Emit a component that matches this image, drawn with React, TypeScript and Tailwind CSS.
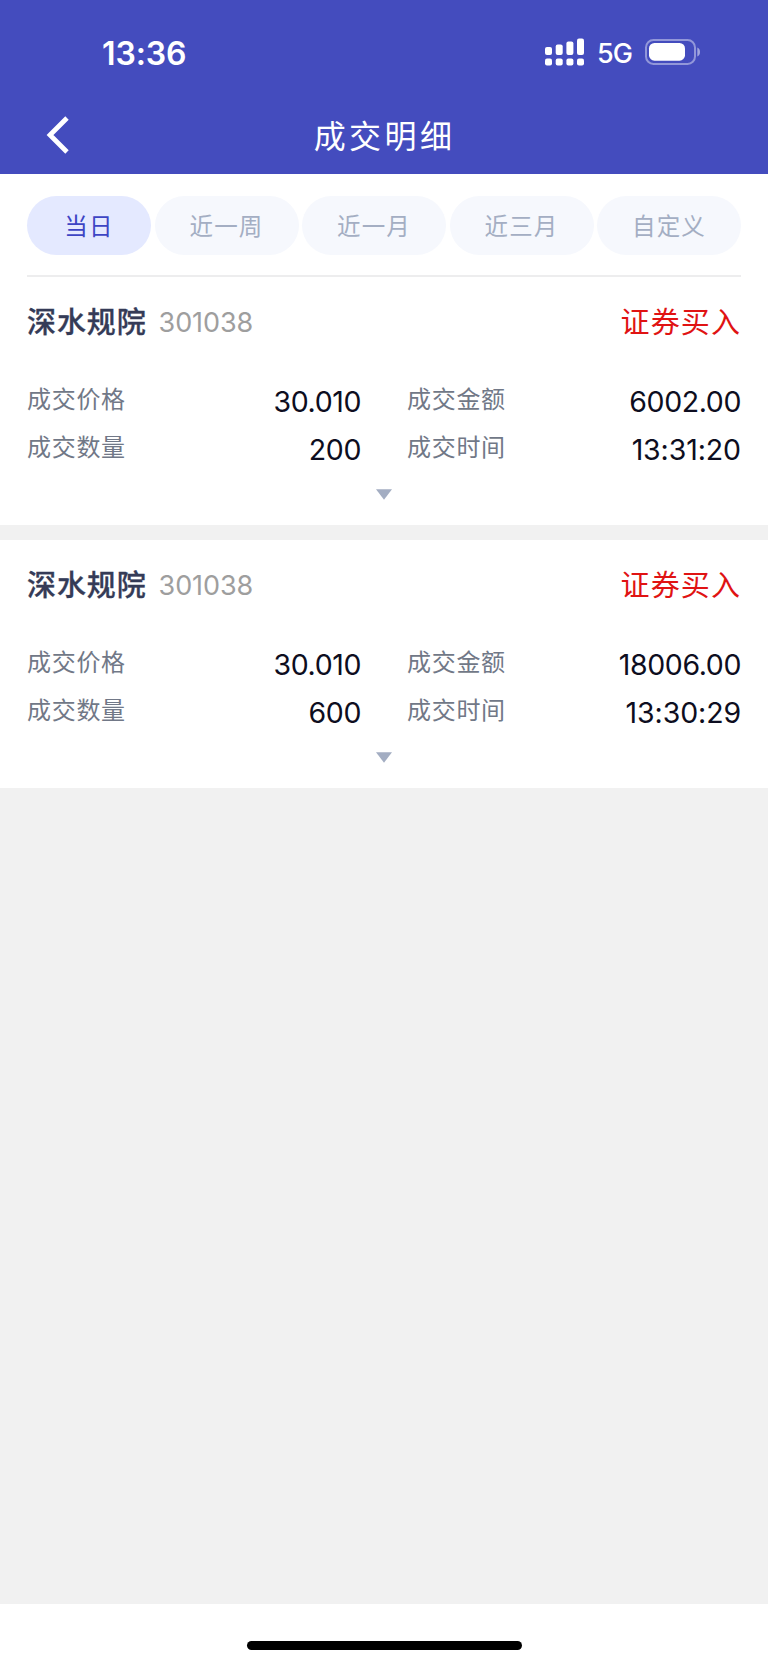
import { useState } from 'react'
import clsx from 'clsx'

interface Trade {
  name: string
  code: string
  side: string
  price: string
  amount: string
  quantity: string
  time: string
}

const TABS = ['当日', '近一周', '近一月', '近三月', '自定义']

const TRADES: Trade[] = [
  {
    name: '深水规院',
    code: '301038',
    side: '证券买入',
    price: '30.010',
    amount: '6002.00',
    quantity: '200',
    time: '13:31:20',
  },
  {
    name: '深水规院',
    code: '301038',
    side: '证券买入',
    price: '30.010',
    amount: '18006.00',
    quantity: '600',
    time: '13:30:29',
  },
]

function SignalIcon() {
  return (
    <svg width="40" height="28" viewBox="0 0 40 28" fill="currentColor">
      <rect x="0" y="9" width="7" height="8" rx="2" />
      <rect x="10.7" y="6.5" width="7" height="10.5" rx="2" />
      <rect x="21.4" y="3.5" width="7" height="13.5" rx="2" />
      <rect x="32" y="0.5" width="7" height="16.5" rx="2" />
      <rect x="0" y="20.5" width="7" height="7" rx="2" />
      <rect x="10.7" y="20.5" width="7" height="7" rx="2" />
      <rect x="21.4" y="20.5" width="7" height="7" rx="2" />
      <rect x="32" y="20.5" width="7" height="7" rx="2" />
    </svg>
  )
}

function BatteryIcon() {
  return (
    <svg width="56" height="26" viewBox="0 0 56 26" fill="none">
      <rect x="1" y="1" width="49" height="24" rx="7.5" stroke="white" strokeOpacity="0.42" strokeWidth="2" />
      <rect x="4" y="4" width="36" height="17.7" rx="5.5" fill="white" />
      <path d="M52.3 8.5C54.2 9.4 55 11 55 13s-.8 3.6-2.7 4.5z" fill="white" fillOpacity="0.5" />
    </svg>
  )
}

function StatusBar() {
  return (
    <div className="flex h-[104px] justify-between pl-[102px] pr-[67px] text-white">
      <span className="pt-[34px] text-[32px] leading-10 font-semibold tracking-[-0.1px]">13:36</span>
      <div className="flex items-start">
        <div className="pt-[37.5px]">
          <SignalIcon />
        </div>
        <span className="ml-3 w-12 pt-[34px] text-[27px] leading-10 font-medium tracking-[-1px]">5G</span>
        <div className="pt-[39px]">
          <BatteryIcon />
        </div>
      </div>
    </div>
  )
}

function NavBar() {
  return (
    <div className="grid h-[70px] grid-cols-[1fr_auto_1fr] text-white">
      <button type="button" className="ml-[46px] mt-[11px] h-10 w-6">
        <svg width="24" height="38" viewBox="0 0 24 38" fill="none" stroke="currentColor" strokeWidth="4.8">
          <path d="M21 2L4 19l17 17" />
        </svg>
      </button>
      <h1 className="pl-[1px] pt-[9px] text-[32px] leading-12 font-normal tracking-[3.4px]">成交明细</h1>
    </div>
  )
}

function Field({ label, value }: { label: string; value: string }) {
  // clock values keep wider spacing than plain numbers
  const isTime = value.includes(':')

  return (
    <div className="flex h-[47.6px] justify-between">
      <span className="text-[24px] leading-[44px] tracking-[0.7px] text-[#717887]">{label}</span>
      <span
        className={clsx(
          'pt-[2px] text-[28.5px] leading-[44px] text-[#0d0d20]',
          isTime ? 'tracking-[-0.1px]' : 'tracking-[-0.4px]'
        )}
      >
        {value}
      </span>
    </div>
  )
}

function TradeCard({ trade }: { trade: Trade }) {
  return (
    <section className="h-[248px] bg-white px-[27px]">
      <div className="flex h-[101px] items-start justify-between pt-[22px] leading-12">
        <div className="flex">
          <h2 className="text-[29px] font-medium tracking-[0.9px] text-[#353b57] [-webkit-text-stroke:0.3px_#353b57]">
            {trade.name}
          </h2>
          <span className="ml-3 text-[27px] tracking-[-0.1px] text-[#9e9e9e]">{trade.code}</span>
        </div>
        <span className="text-[29px] tracking-[1.1px] text-[#e01313]">{trade.side}</span>
      </div>
      <div className="grid grid-cols-2 gap-x-[46px]">
        <Field label="成交价格" value={trade.price} />
        <Field label="成交金额" value={trade.amount} />
        <Field label="成交数量" value={trade.quantity} />
        <Field label="成交时间" value={trade.time} />
      </div>
      <button type="button" className="mx-auto mt-4 block">
        <svg width="16" height="11" viewBox="0 0 16 11" fill="#a3adc2">
          <path d="M0 0.3h16L8 10.8z" />
        </svg>
      </button>
    </section>
  )
}

export default function App() {
  const [activeTab, setActiveTab] = useState(0)

  return (
    <div className="flex h-[1665px] w-[768px] flex-col bg-[#f1f1f1] font-[Inter,'Noto_Sans_CJK_SC',sans-serif]">
      <header className="bg-[#444cbe]">
        <StatusBar />
        <NavBar />
      </header>

      <nav className="bg-white px-[27px] pt-[22px]">
        <div className="flex justify-between border-b-2 border-[#ededee] pb-5">
          {TABS.map((tab, i) => (
            <button
              key={tab}
              type="button"
              onClick={() => setActiveTab(i)}
              className={clsx(
                'h-[59px] rounded-full pt-[2px] text-[23.5px] tracking-[1.2px]',
                i === 0 ? 'w-[124px]' : 'w-[144px]',
                i === activeTab ? 'bg-[#e4e9ff] text-[#3d45c4]' : 'bg-[#f6f8fd] text-[#a4aec3]'
              )}
            >
              {tab}
            </button>
          ))}
        </div>
      </nav>

      <main className="flex flex-1 flex-col gap-[15px]">
        {TRADES.map((trade) => (
          <TradeCard key={trade.time} trade={trade} />
        ))}
      </main>

      {/* home indicator */}
      <footer className="flex h-[61px] justify-center bg-white pt-[37px]">
        <div className="h-[9px] w-[275px] rounded-full bg-black" />
      </footer>
    </div>
  )
}
